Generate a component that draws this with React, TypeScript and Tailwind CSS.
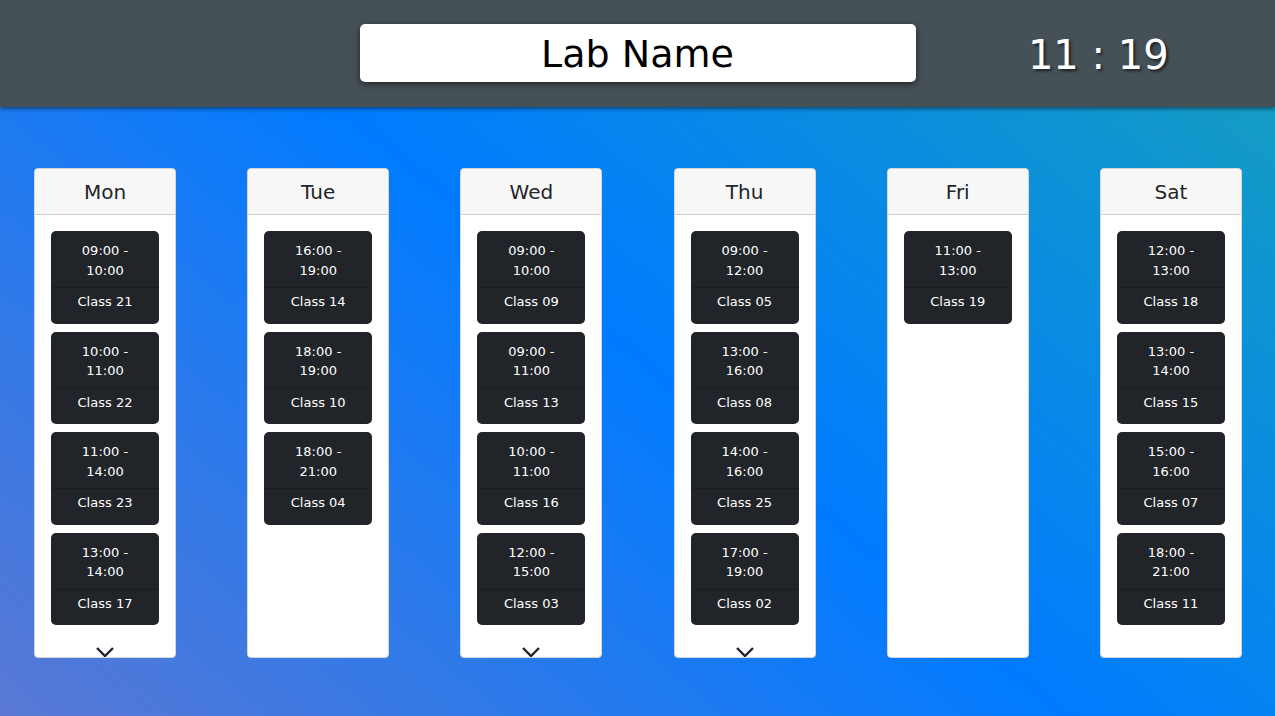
import React from "react";

type Slot = { start: string; end: string; name: string };
type Day = { day: string; slots: Slot[]; more?: boolean };

const days: Day[] = [
  {
    day: "Mon",
    more: true,
    slots: [
      { start: "09:00", end: "10:00", name: "Class 21" },
      { start: "10:00", end: "11:00", name: "Class 22" },
      { start: "11:00", end: "14:00", name: "Class 23" },
      { start: "13:00", end: "14:00", name: "Class 17" },
    ],
  },
  {
    day: "Tue",
    slots: [
      { start: "16:00", end: "19:00", name: "Class 14" },
      { start: "18:00", end: "19:00", name: "Class 10" },
      { start: "18:00", end: "21:00", name: "Class 04" },
    ],
  },
  {
    day: "Wed",
    more: true,
    slots: [
      { start: "09:00", end: "10:00", name: "Class 09" },
      { start: "09:00", end: "11:00", name: "Class 13" },
      { start: "10:00", end: "11:00", name: "Class 16" },
      { start: "12:00", end: "15:00", name: "Class 03" },
    ],
  },
  {
    day: "Thu",
    more: true,
    slots: [
      { start: "09:00", end: "12:00", name: "Class 05" },
      { start: "13:00", end: "16:00", name: "Class 08" },
      { start: "14:00", end: "16:00", name: "Class 25" },
      { start: "17:00", end: "19:00", name: "Class 02" },
    ],
  },
  {
    day: "Fri",
    slots: [{ start: "11:00", end: "13:00", name: "Class 19" }],
  },
  {
    day: "Sat",
    slots: [
      { start: "12:00", end: "13:00", name: "Class 18" },
      { start: "13:00", end: "14:00", name: "Class 15" },
      { start: "15:00", end: "16:00", name: "Class 07" },
      { start: "18:00", end: "21:00", name: "Class 11" },
    ],
  },
];

function SlotCard({ s }: { s: Slot }) {
  return (
    <div className="rounded-[5px] bg-[#212529] text-white text-[13px] leading-[19.5px] text-center">
      <div className="pt-[10px] pb-[7px] border-b border-[#1a1d20]">
        <div>{s.start} -</div>
        <div>{s.end}</div>
      </div>
      <div className="pt-[4px] pb-[12px]">{s.name}</div>
    </div>
  );
}

function DayColumn({ d }: { d: Day }) {
  return (
    <div className="relative w-[142px] h-[490px] bg-white rounded-[4px] border border-[#d6d6d6] overflow-hidden flex flex-col">
      <div className="h-[46px] shrink-0 bg-[#f7f7f7] border-b border-[#cfcfcf] flex items-center justify-center text-[20px] text-[#212529]">
        {d.day}
      </div>
      <div className="flex flex-col gap-[8px] px-[16px] pt-[16px]">
        {d.slots.map((s, i) => (
          <SlotCard key={i} s={s} />
        ))}
      </div>
      {d.more && (
        <div className="absolute bottom-[-1px] left-0 right-0 flex justify-center">
          <svg width="20" height="12" viewBox="0 0 20 12">
            <polyline
              points="2,2 10,10 18,2"
              fill="none"
              stroke="#212529"
              strokeWidth="2.4"
            />
          </svg>
        </div>
      )}
    </div>
  );
}

export default function App() {
  return (
    <div
      className="w-[1275px] h-[716px] overflow-hidden flex flex-col bg-[linear-gradient(40deg,#5a78d4_0%,#007bff_50%,#18a0bc_100%)]"
      style={{ fontFamily: '"DejaVu Sans", Verdana, sans-serif' }}
    >
      <header className="h-[107px] shrink-0 bg-[#465057] shadow-[0_2px_4px_rgba(0,0,0,0.45)] grid grid-cols-[1fr_556px_1fr] items-center relative z-10">
        <div />
        <div className="h-[58px] mb-[1px] bg-white rounded-[5px] shadow-[0_2px_6px_rgba(0,0,0,0.55)] flex items-center justify-center pt-[3px] text-[38px] text-black">
          Lab Name
        </div>
        <div className="flex justify-center pl-[6px] pt-[2px]">
          <span className="text-[40px] text-white [text-shadow:2px_2px_3px_rgba(0,0,0,0.6)]">
            11 : 19
          </span>
        </div>
      </header>
      <main className="flex justify-between pl-[34px] pr-[33px] pt-[61px]">
        {days.map((d) => (
          <DayColumn key={d.day} d={d} />
        ))}
      </main>
    </div>
  );
}
